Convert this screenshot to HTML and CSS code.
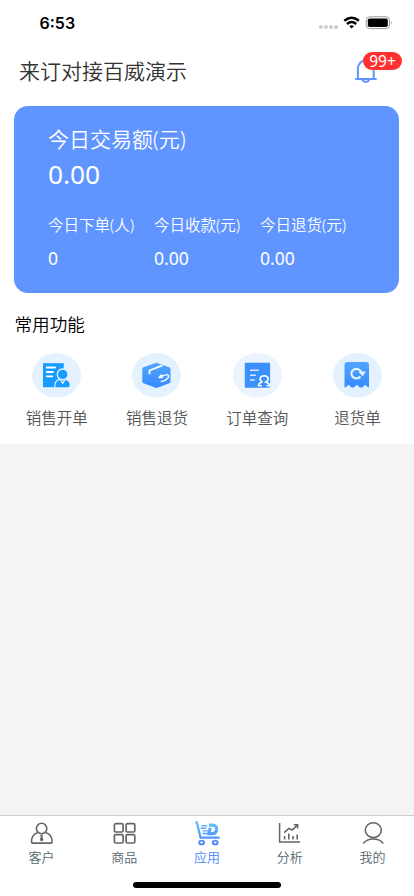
FILE: index.html
```html
<!DOCTYPE html>
<html lang="zh-CN">
<head>
<meta charset="utf-8">
<title>来订对接百威演示</title>
<link rel="stylesheet" href="styles.css">
</head>
<body>
<div class="app">
  <header class="status">
    <span class="time">6:53</span>
    <svg class="status-icons" width="75" height="16" viewBox="318 15 75 16">
      <g fill="#ccc"><circle cx="320.9" cy="27" r="2"/><circle cx="326" cy="27" r="2"/><circle cx="331" cy="27" r="2"/><circle cx="336" cy="27" r="2"/></g>
      <g fill="none" stroke="#000" stroke-width="2.4"><path d="M344.3 20.8Q351.6 14.9 358.9 20.8"/><path d="M346.9 24Q351.6 20.2 356.3 24"/></g>
      <path d="M349.2 26Q351.6 24.3 354 26L351.6 28.5Z"/>
      <rect x="366.2" y="16.8" width="23.3" height="11.8" rx="3.4" fill="none" stroke="#999" stroke-width="1"/>
      <rect x="367.8" y="18.5" width="20" height="8.5" rx="1.8"/>
      <path d="M391 21Q392.6 22.8 391 24.8Z" fill="#888"/>
    </svg>
  </header>
  <div class="heading">
    <h1>来订对接百威演示</h1>
    <div class="bell">
      <svg width="24" height="26" viewBox="0 0 24 26" fill="none" stroke="#6095ff" stroke-width="2"><path d="M2.9 21V10.5a7.9 8.2 0 0 1 15.8 0V21M.3 21.1h21.4M7.4 21.6a3.5 3 0 0 0 6.8 0"/></svg>
      <span class="badge">99+</span>
    </div>
  </div>
  <section class="card">
    <div class="card-title">今日交易额(元)</div>
    <div class="total">0.00</div>
    <div class="stats">
      <div><p>今日下单(人)</p><b>0</b></div>
      <div><p>今日收款(元)</p><b>0.00</b></div>
      <div><p>今日退货(元)</p><b>0.00</b></div>
    </div>
  </section>
  <section class="features">
    <h2>常用功能</h2>
    <div class="grid">
      <div class="feature">
        <svg width="49" height="45" viewBox="0 0 49 45"><ellipse cx="24.5" cy="22.3" rx="24.4" ry="22.3" fill="#e4f1ff"/><path d="M11 10.2h20.7v24H11z" fill="#169bff"/><path d="M14.7 14.5h8.4M14.7 19h6.2M14.7 23.3h5.6" stroke="#fff" stroke-width="1.8" stroke-linecap="round"/><path d="M22.8 34.9c-.5-4.7 1.8-7.9 5.2-8.8l2.7 4.3 2.7-4.3c3.4 1 5.2 4 4.8 7q-.2 1.8-2 1.8Z" fill="#169bff" stroke="#e4f1ff" stroke-width="1.2"/><circle cx="30.7" cy="21.4" r="5.4" fill="#169bff" stroke="#e4f1ff" stroke-width="1.4"/></svg>
        <span>销售开单</span>
      </div>
      <div class="feature">
        <svg width="49" height="45" viewBox="0 0 49 45"><defs><linearGradient id="blue" x2="0" y2="1"><stop stop-color="#52a5ff"/><stop offset="1" stop-color="#358bff"/></linearGradient></defs><ellipse cx="24.5" cy="22.3" rx="24.4" ry="22.3" fill="#e4f1ff"/><path d="M23 10.2q1.5-.7 3 0l11.3 4.1q1.2.5 1.2 1.8v12.4q0 1.2-1.2 1.8L26 34.5q-1.5.6-3 0l-11.5-4.2q-1.2-.6-1.2-1.8V16.1q0-1.3 1.2-1.8Z" fill="url(#blue)"/><path d="M17.5 21.3v-3.8L30.5 12.3" fill="none" stroke="#fff" stroke-width="1.8"/><path d="m29.8 21.6-2.5 2.7 3.6.3m-3.2-.4 4.4-1.9c3.7-1.7 5.4.2 3.8 2.6-1.5 2.1-4.5 3.4-7.1 3.7" fill="none" stroke="#fff" stroke-width="1.4"/></svg>
        <span>销售退货</span>
      </div>
      <div class="feature">
        <svg width="49" height="45" viewBox="0 0 49 45"><ellipse cx="24.5" cy="22.3" rx="24.4" ry="22.3" fill="#eaf3ff"/><rect x="11.8" y="9.8" width="25.3" height="25" rx="1" fill="#3b91fb"/><path d="M17 17.2h8.8M17 22.2h5.8M17 27h4.8" stroke="#d9e9ff" stroke-width="1.4"/><path d="M29.4 29c-4.2-2.400-2.300-6.300 1.700-6.300s5.900 3.900 1.700 6.300c2.600.6 3.600 1.800 3.800 3.800h-3M29.400 29c-2.600.6-3.800 1.800-4 3.800h3.500" fill="none" stroke="#fff" stroke-width="1.5"/></svg>
        <span>订单查询</span>
      </div>
      <div class="feature">
        <svg width="49" height="45" viewBox="0 0 49 45"><ellipse cx="24.5" cy="22.3" rx="24.4" ry="22.3" fill="#e4f1ff"/><path d="M11.5 12q0-3 3-3H33q3 0 3 3v22.6c-2-.2-2.6-2.6-3.8-2.6-1.4 0-1.6 2.6-4.2 2.6S25.2 32 23.8 32s-1.600 2.600-4.200 2.600S17 32 15.500 32s-1.800 2.600-4 2.600Z" fill="url(#blue)"/><path d="M27.500 23.500a5.100 4.700 0 1 1 .8-4.300" fill="none" stroke="#e4f1ff" stroke-width="2.200"/><path d="m25.400 19 7.500-.7-3.200 4.900Z" fill="#e4f1ff"/></svg>
        <span>退货单</span>
      </div>
    </div>
  </section>
  <main class="blank"></main>
  <nav class="tabs">
    <div class="tab"><svg width="26" height="26" viewBox="0 0 26 26" fill="none" stroke="#666" stroke-width="1.6"><circle cx="13.6" cy="7.5" r="5.2"/><path d="M9.800 11.600C5.500 13 3.500 16 3.500 20.700q0 1.400 1.300 1.400h18q1.300 0 1.300-1.400c0-4.700-2-7.700-6.400-9.100"/><path d="M12 13.800h3.200l-.8 1.500 1 3.700-1.800 1.600-1.800-1.600 1-3.700Z" fill="#666" stroke="none"/></svg><span>客户</span></div>
    <div class="tab"><svg width="26" height="26" viewBox="0 0 26 26" fill="none" stroke="#666" stroke-width="1.7"><rect x="3.400" y="2.700" width="8.700" height="8.300" rx="1.300"/><rect x="15.100" y="2.700" width="8.700" height="8.300" rx="1.300"/><rect x="3.400" y="13.700" width="8.700" height="8.300" rx="1.300"/><rect x="15.100" y="13.700" width="8.700" height="8.300" rx="1.300"/></svg><span>商品</span></div>
    <div class="tab active"><svg width="26" height="26" viewBox="0 0 26 26"><defs><linearGradient id="cart" x2="0" y2="25" gradientUnits="userSpaceOnUse"><stop stop-color="#66c4fa"/><stop offset="1" stop-color="#4c7ef5"/></linearGradient></defs><g fill="none" stroke="url(#cart)"><path d="M1.300 1.300h1.500l3.800 15.400h19" stroke-width="2.300"/><path d="M7.300 4.800h6M6.500 7.300h6M8.500 9.900h6M8.500 12.500h6" stroke-width="1.400"/><path d="M15 4.200h3.500q4.400 0 4.100 4.200-.3 4.300-4.600 4.300h-3l1.200-6" stroke-width="3.200"/><ellipse cx="7.600" cy="21.500" rx="2.400" ry="1.900" stroke-width="1.900"/><ellipse cx="21.200" cy="21.500" rx="2.400" ry="1.900" stroke-width="1.900"/></g></svg><span>应用</span></div>
    <div class="tab"><svg width="26" height="26" viewBox="0 0 26 26" fill="none" stroke="#666" stroke-width="1.500"><path d="M2.600 2v19h20.500M7.200 11.600l4.600-4.200 3.300 1.600 5.300-4.900M16.900 3.800h3.800v3.800"/><path d="M7.600 14.900v3.500M11.800 12.400v6M16 14.900v3.500M20.200 13.500v4.900" stroke-width="1.600"/></svg><span>分析</span></div>
    <div class="tab"><svg width="26" height="26" viewBox="0 0 26 26" fill="none" stroke="#666" stroke-width="1.600"><ellipse cx="13.300" cy="9.200" rx="8" ry="7.400"/><path d="M3.300 22.500c4.500-6 15.500-6 20 0"/></svg><span>我的</span></div>
  </nav>
  <div class="home"></div>
</div>
</body>
</html>
```
FILE: styles.css
```css
* { box-sizing: border-box; margin: 0; padding: 0; }
body {
  width: 414px;
  background: #fff;
  font-family: "Noto Sans", "Noto Sans CJK SC", sans-serif;
  font-weight: 350;
  color: #333;
}
h1, h2 { font-weight: inherit; }
svg { display: block; flex: none; }
.app { height: 896px; display: flex; flex-direction: column; overflow: hidden; }
.status { height: 46px; flex: none; display: flex; justify-content: space-between; padding: 15px 21px 0 39.5px; }
.time { font: 600 16px/17px Inter, sans-serif; color: #000; }
.heading { height: 60px; flex: none; display: flex; justify-content: space-between; padding: 10px 35px 0 19px; }
h1 { font-size: 21px; line-height: 30px; }
.bell { position: relative; width: 24px; height: 26px; margin-top: 2px; }
.badge {
  position: absolute; left: 8px; top: -6px; width: 39px; height: 18px;
  border-radius: 9px; background: #ff3131; color: #fff;
  font-size: 15.5px; font-weight: 400; line-height: 18px; text-align: center;
}
.card {
  flex: none; height: 187px; width: 385px; margin-left: 14.4px; padding: 18px 0 0 33.5px;
  border-radius: 14px; background: #6095ff; color: #fff;
}
.card-title { font-size: 21px; line-height: 30px; }
.total { font-size: 26.3px; font-weight: 400; line-height: 40px; }
.stats { display: grid; grid-template-columns: repeat(3, 106px); margin-top: 19px; }
.stats p { font-size: 15.5px; line-height: 24px; }
.stats b { display: block; font-size: 17.6px; font-weight: 400; line-height: 26px; margin-top: 8px; }
.features { flex: none; height: 151px; padding-top: 17px; }
h2 { font-size: 17.6px; line-height: 28px; padding-left: 14.5px; color: #000; }
.grid { display: grid; grid-template-columns: repeat(4, 100.3px); padding-left: 6.5px; margin-top: 15px; }
.feature { display: flex; flex-direction: column; align-items: center; }
.feature span { font-size: 15.5px; line-height: 24px; margin-top: 8px; color: #555; }
.blank { flex: 1; background: #f4f4f4; }
.tabs { flex: none; height: 67px; display: grid; grid-template-columns: repeat(5, 1fr); border-top: 1px solid #ccc; padding-top: 5px; }
.tab { display: flex; flex-direction: column; align-items: center; color: #566770; }
.tab span { font-size: 13px; line-height: 20px; }
.active { color: #4c86ff; }
.home { flex: none; width: 148px; height: 6px; border-radius: 3px; background: #000; margin: 0 auto 8px; }
```
